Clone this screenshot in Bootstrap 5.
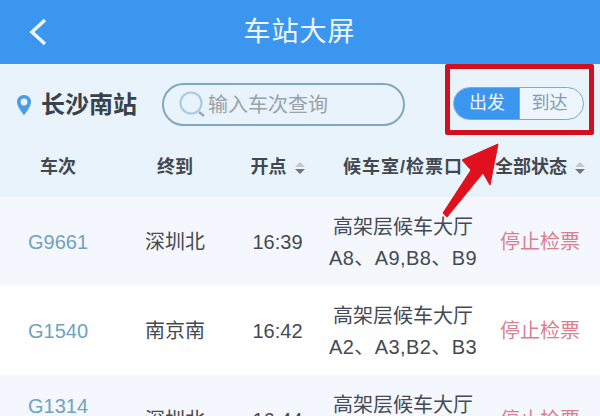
<!DOCTYPE html>
<html lang="zh-CN">
  <head>
    <meta charset="UTF-8" />
    <meta name="viewport" content="width=device-width, initial-scale=1.0" />
    <title>车站大屏</title>
    <link href="https://cdn.jsdelivr.net/npm/bootstrap@5.3.0/dist/css/bootstrap.min.css" rel="stylesheet" />
    <style>
      html, body { width: 600px; height: 416px; overflow: hidden; }
      body { font-family: "Liberation Sans", "Noto Sans CJK SC", sans-serif; background: #fff; color: #444a52; position: relative; }
      .top-bar { height: 64px; background: #3b96f0; color: #eef6fe; font-size: 27px; padding-left: 28px; }
      .top-title { flex: 1; text-align: center; padding-right: 49px; letter-spacing: 1px; }
      .search-panel { height: 133px; background: #e8f3fc; }
      .station-row { height: 84px; padding-left: 16px; padding-top: 19px; }
      .station-name { font-size: 24px; font-weight: 700; color: #3a4149; margin-left: 9px; width: 121px; line-height: 1; }
      .search-box { width: 243px; height: 43px; border: 2px solid #7fa9bf; border-radius: 22px; padding-left: 14px; color: #9aa1a8; font-size: 20px; }
      .search-box span { margin-left: 2px; }
      .dir-switch { width: 131px; height: 33px; margin-top: 4px; margin-left: 48px; border: 1.5px solid #7fa9c9; border-radius: 17px; overflow: hidden; font-size: 18px; background: #edf6fd; }
      .dir-on { width: 65px; background: #3b96f0; color: #eef6fe; padding-left: 1px; }
      .dir-off { flex: 1; color: #7d9db5; border-left: 1px solid #7fa9c9; padding-right: 4px; }
      .head-row { height: 49px; font-size: 18px; font-weight: 700; color: #42484f; padding-bottom: 10px; }
      .train-row { height: 89px; background: #fff; font-size: 20px; }
      .row-tint { background: #f4f7fd; }
      .c-train { width: 116px; }
      .c-dest { width: 118px; }
      .c-time { width: 87px; }
      .c-room { width: 164px; line-height: 31px; padding-top: 3px; }
      .c-state { width: 110px; }
      .head-row .c-room { padding-top: 0; letter-spacing: 1px; }
      .gate-line { letter-spacing: .4px; }
      .train-no { color: #6fa3bf; }
      .train-up { padding-bottom: 27px; }
      .state-txt { color: #d9808e; }
      .sort-mark { display: inline-flex; flex-direction: column; gap: 2px; margin-left: 8px; vertical-align: middle; }
      .sort-mark i { display: block; border-left: 5px solid transparent; border-right: 5px solid transparent; }
      .sort-mark i:first-child { border-bottom: 5px solid #c4c8cc; }
      .sort-mark i:last-child { border-top: 5px solid #70767c; }
      .red-frame { position: absolute; left: 445px; top: 64px; width: 149px; height: 71px; border: 5px solid #d0101f; border-radius: 2px; }
      .red-arrow { position: absolute; left: 430px; top: 138px; }
    </style>
  </head>
  <body>
    <div class="top-bar d-flex align-items-center">
      <svg width="20" height="28" viewBox="0 0 20 28"><path d="M17 2 L4 14 L17 26" fill="none" stroke="#eef6fe" stroke-width="3.5" /></svg>
      <div class="top-title">车站大屏</div>
    </div>

    <div class="search-panel">
      <div class="station-row d-flex align-items-start">
        <div class="d-flex align-items-center" style="height:43px">
          <svg width="16" height="22" viewBox="0 0 16 22"><path d="M8 1C4 1 1 4 1 8c0 5 7 13 7 13s7-8 7-13c0-4-3-7-7-7z" fill="#4b9be8" /><circle cx="8" cy="8" r="3.4" fill="#e8f3fc" /></svg>
          <div class="station-name">长沙南站</div>
        </div>
        <div class="search-box d-flex align-items-center">
          <svg width="28" height="30" viewBox="0 0 28 30"><circle cx="13" cy="13" r="10.5" fill="none" stroke="#a8cbe2" stroke-width="2.2" /><path d="M21 22l5 4" stroke="#93a9b8" stroke-width="2.4" /></svg>
          <span>输入车次查询</span>
        </div>
        <div class="dir-switch d-flex text-center">
          <div class="dir-on d-flex align-items-center justify-content-center">出发</div>
          <div class="dir-off d-flex align-items-center justify-content-center">到达</div>
        </div>
      </div>
      <div class="head-row d-flex align-items-center text-center">
        <div class="c-train">车次</div>
        <div class="c-dest">终到</div>
        <div class="c-time">开点<span class="sort-mark"><i></i><i></i></span></div>
        <div class="c-room">候车室/检票口</div>
        <div class="c-state">全部状态<span class="sort-mark"><i></i><i></i></span></div>
      </div>
    </div>

    <div class="train-row row-tint d-flex align-items-center text-center">
      <div class="c-train train-no">G9661</div>
      <div class="c-dest">深圳北</div>
      <div class="c-time">16:39</div>
      <div class="c-room">高架层候车大厅<br /><span class="gate-line">A8、A9,B8、B9</span></div>
      <div class="c-state state-txt">停止检票</div>
    </div>
    <div class="train-row d-flex align-items-center text-center">
      <div class="c-train train-no">G1540</div>
      <div class="c-dest">南京南</div>
      <div class="c-time">16:42</div>
      <div class="c-room">高架层候车大厅<br /><span class="gate-line">A2、A3,B2、B3</span></div>
      <div class="c-state state-txt">停止检票</div>
    </div>
    <div class="train-row row-tint d-flex align-items-center text-center">
      <div class="c-train train-no train-up">G1314</div>
      <div class="c-dest">深圳北</div>
      <div class="c-time">16:44</div>
      <div class="c-room">高架层候车大厅<br /><span class="gate-line">A2、A3,B2、B3</span></div>
      <div class="c-state state-txt">停止检票</div>
    </div>

    <div class="red-frame"></div>
    <svg class="red-arrow" width="80" height="84" viewBox="0 0 80 84"><path d="M68 6 L60 47 L53 35 L17 79 L13 75 L41 32 L32 22 Z" fill="#e0101c" stroke="#e0101c" stroke-linejoin="round" /></svg>

    <script src="https://cdn.jsdelivr.net/npm/bootstrap@5.3.0/dist/js/bootstrap.bundle.min.js"></script>
  </body>
</html>
